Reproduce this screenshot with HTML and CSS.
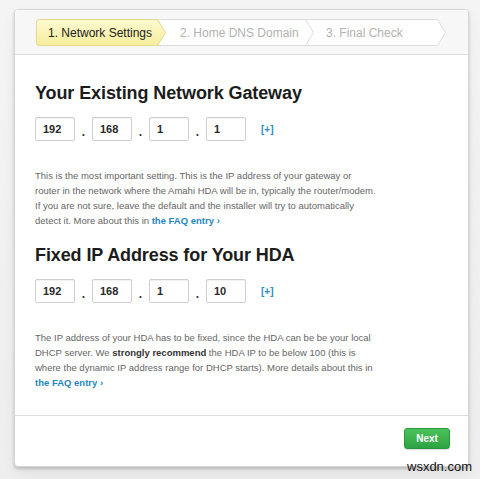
FILE: index.html
```html
<!DOCTYPE html>
<html>
<head>
<meta charset="utf-8">
<link rel="stylesheet" href="styles.css">
</head>
<body>
<div class="page">
  <div class="card">
    <div class="card-head">
      <div class="crumbs">
        <svg class="crumbs-bg" width="412" height="27" viewBox="0 0 412 27">
          <defs>
            <linearGradient id="yel" x1="0" y1="0" x2="0" y2="1">
              <stop offset="0" stop-color="#fdfad0"/>
              <stop offset="1" stop-color="#f6ed9c"/>
            </linearGradient>
          </defs>
          <path d="M3.5,0.5 H401.5 L409.5,13.5 L401.5,26.5 H3.5 Q0.5,26.5 0.5,23.5 V3.5 Q0.5,0.5 3.5,0.5 Z" fill="#fff" stroke="#dcdcdc"/>
          <path d="M3.5,0.5 H121.5 L129.5,13.5 L121.5,26.5 H3.5 Q0.5,26.5 0.5,23.5 V3.5 Q0.5,0.5 3.5,0.5 Z" fill="url(#yel)" stroke="#e2da8e"/>
          <path d="M269.5,0.5 L277.5,13.5 L269.5,26.5" fill="none" stroke="#dcdcdc"/>
        </svg>
        <span class="step step-1 active">1. Network Settings</span>
        <span class="step step-2">2. Home DNS Domain</span>
        <span class="step step-3">3. Final Check</span>
      </div>
    </div>
    <div class="card-body">
      <h2 class="title">Your Existing Network Gateway</h2>
      <div class="ip-row">
        <span class="ip-box">192</span><span class="dot">.</span>
        <span class="ip-box">168</span><span class="dot">.</span>
        <span class="ip-box">1</span><span class="dot">.</span>
        <span class="ip-box">1</span>
        <span class="more">[+]</span>
      </div>
      <p class="help">This is the most important setting. This is the IP address of your gateway or<br>router in the network where the Amahi HDA will be in, typically the router/modem.<br>If you are not sure, leave the default and the installer will try to automatically<br>detect it. More about this in <a class="faq">the FAQ entry ›</a></p>

      <h2 class="title title-2">Fixed IP Address for Your HDA</h2>
      <div class="ip-row">
        <span class="ip-box">192</span><span class="dot">.</span>
        <span class="ip-box">168</span><span class="dot">.</span>
        <span class="ip-box">1</span><span class="dot">.</span>
        <span class="ip-box">10</span>
        <span class="more">[+]</span>
      </div>
      <p class="help">The IP address of your HDA has to be fixed, since the HDA can be be your local<br>DHCP server. We <strong>strongly recommend</strong> the HDA IP to be below 100 (this is<br>where the dynamic IP address range for DHCP starts). More details about this in<br><a class="faq">the FAQ entry ›</a></p>
    </div>
    <div class="card-foot">
      <button class="next">Next</button>
    </div>
  </div>
  <div class="watermark">wsxdn.com</div>
</div>
</body>
</html>
```

FILE: styles.css
```css
html, body {
  margin: 0;
  padding: 0;
  background: #f1f1f1;
}
.page {
  width: 480px;
  height: 479px;
  padding: 9px 0 0 14px;
  box-sizing: border-box;
  position: relative;
  font-family: "Liberation Sans", Arial, sans-serif;
  background: linear-gradient(#f4f4f4, #eeeeee);
}
.card {
  width: 455px;
  height: 458px;
  box-sizing: border-box;
  background: #fff;
  border: 1px solid #d6d6d6;
  border-radius: 4px;
  box-shadow: 0 2px 3px rgba(0,0,0,0.18), 0 6px 14px rgba(0,0,0,0.06);
  display: flex;
  flex-direction: column;
  overflow: hidden;
}
.card-head {
  height: 45px;
  box-sizing: border-box;
  background: #f7f7f7;
  border-bottom: 1px solid #dedede;
  padding: 9px 0 0 21px;
}
.crumbs {
  position: relative;
  width: 412px;
  height: 27px;
  display: flex;
  align-items: center;
  font-size: 12px;
}
.crumbs-bg {
  position: absolute;
  left: 0;
  top: 0;
}
.step {
  position: relative;
  color: #b2b2b2;
  white-space: nowrap;
}
.step-1 { margin-left: 12px; width: 132px; color: #222; }
.step-2 { width: 146px; }
.step-3 { }
.card-body {
  padding: 27px 20px 0 20px;
  flex: 1;
  border-bottom: 1px solid #dcdcdc;
}
.title {
  margin: 0;
  font-size: 18px;
  line-height: 22px;
  font-weight: bold;
  color: #1c1c1c;
  letter-spacing: -0.1px;
}
.title-2 { margin-top: 16px; }
.ip-row {
  margin-top: 13px;
  display: flex;
  align-items: center;
  height: 24px;
}
.ip-box {
  width: 40px;
  height: 24px;
  box-sizing: border-box;
  border: 1px solid #cfcfcf;
  border-radius: 2px;
  box-shadow: inset 0 1px 1px rgba(0,0,0,0.06);
  padding-left: 7px;
  font-size: 11px;
  font-weight: bold;
  line-height: 22px;
  color: #2a2a2a;
}
.dot {
  width: 17px;
  text-align: center;
  font-size: 12px;
  font-weight: bold;
  color: #333;
  align-self: flex-end;
  line-height: 18px;
}
.more {
  margin-left: 15px;
  font-size: 10px;
  font-weight: bold;
  color: #2a8cc4;
}
.help {
  margin: 27px 0 0 0;
  font-size: 9.5px;
  line-height: 15px;
  color: #666;
}
.help strong { color: #333; }
.faq {
  color: #1f86c2;
  font-weight: bold;
}
.card-foot {
  height: 50px;
  display: flex;
  justify-content: flex-end;
  align-items: flex-start;
  padding: 12px 18px 0 0;
  box-sizing: border-box;
}
.next {
  width: 46px;
  height: 21px;
  border: 1px solid #259a3a;
  border-radius: 3px;
  background: linear-gradient(#4cc25b, #2ea343);
  color: #fff;
  font-family: "Liberation Sans", Arial, sans-serif;
  font-size: 10px;
  font-weight: bold;
  padding: 0;
  box-shadow: 0 1px 1px rgba(0,0,0,0.15);
}
.watermark {
  position: absolute;
  left: 407px;
  top: 459px;
  font-size: 13px;
  color: #111;
  font-family: "Liberation Sans", Arial, sans-serif;
}
```
